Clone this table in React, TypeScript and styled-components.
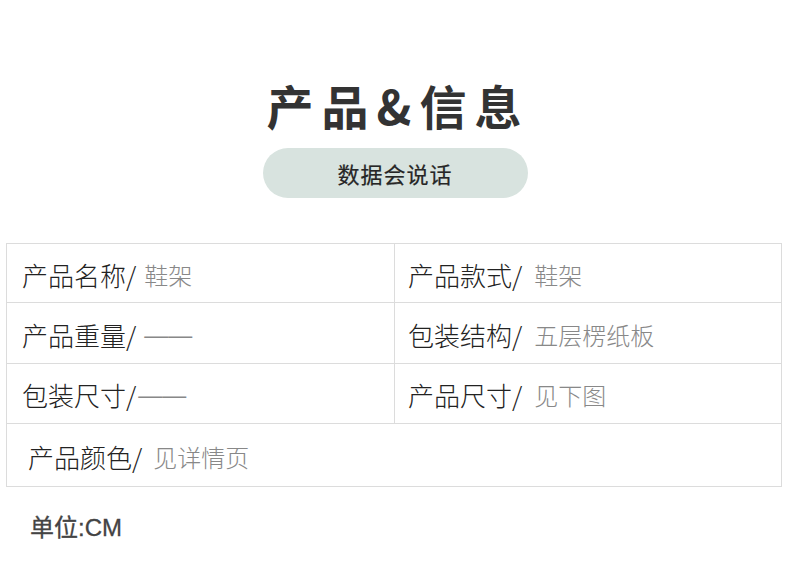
import React from "react";
import styled, { createGlobalStyle } from "styled-components";

const Global = createGlobalStyle`
  html, body { margin: 0; padding: 0; background: #fff; }
  body { font-family: "Noto Sans CJK SC", "Noto Sans", sans-serif; }
`;

const Page = styled.div`
  width: 790px;
  height: 578px;
  display: flex;
  flex-direction: column;
  align-items: center;
  background: #fff;
  overflow: hidden;
`;

const Title = styled.h1`
  margin: 80px 0 0 6px;
  font-size: 47px;
  line-height: 50px;
  font-weight: 700;
  letter-spacing: 8px;
  color: #333;
`;

const Pill = styled.div`
  margin-top: 18px;
  width: 265px;
  height: 50px;
  border-radius: 25px;
  background: #d8e3df;
  display: flex;
  align-items: center;
  justify-content: center;
  font-size: 22px;
  font-weight: 400;
  color: #262626;
  letter-spacing: 1px;
  -webkit-text-stroke: 0.2px #262626;
`;

const Table = styled.div`
  margin-top: 45px;
  align-self: flex-start;
  margin-left: 6px;
  width: 776px;
  box-sizing: border-box;
  border: 1px solid #dcdcdc;
  display: grid;
  grid-template-columns: 388px 1fr;
  grid-template-rows: 59px 61px 60px 62px;
`;

const Cell = styled.div<{ $right?: boolean; $last?: boolean; $wide?: boolean; $pad?: number }>`
  box-sizing: border-box;
  display: flex;
  align-items: center;
  padding-left: ${(p) => p.$pad ?? 15}px;
  padding-top: 3px;
  border-bottom: ${(p) => (p.$last ? "none" : "1px solid #dcdcdc")};
  border-right: ${(p) => (p.$right || p.$wide ? "none" : "1px solid #dcdcdc")};
  grid-column: ${(p) => (p.$wide ? "1 / span 2" : "auto")};
`;

const Label = styled.span`
  font-size: 26px;
  font-weight: 300;
  color: #222;
  line-height: 1;
`;

const Value = styled.span<{ $gap?: number }>`
  margin-left: ${(p) => p.$gap ?? 8}px;
  font-size: 24px;
  font-weight: 300;
  color: #888;
  line-height: 1;
`;

const Dash = styled.span<{ $gap?: number }>`
  margin-left: ${(p) => p.$gap ?? 8}px;
  font-family: "Liberation Sans", sans-serif;
  font-size: 24px;
  color: #888;
  line-height: 1;
`;

const Unit = styled.div`
  align-self: flex-start;
  margin: 21px 0 0 30px;
  font-family: "Liberation Sans", "Noto Sans CJK SC", sans-serif;
  font-size: 24px;
  font-weight: 400;
  color: #444;
  -webkit-text-stroke: 0.3px #444;
`;

export default function App() {
  return (
    <>
      <Global />
      <Page>
        <Title>产品&amp;信息</Title>
        <Pill>数据会说话</Pill>
        <Table>
          <Cell>
            <Label>产品名称/</Label>
            <Value>鞋架</Value>
          </Cell>
          <Cell $right $pad={13}>
            <Label>产品款式/</Label>
            <Value $gap={12}>鞋架</Value>
          </Cell>
          <Cell>
            <Label>产品重量/</Label>
            <Dash $gap={8}>——</Dash>
          </Cell>
          <Cell $right $pad={13}>
            <Label>包装结构/</Label>
            <Value $gap={12}>五层楞纸板</Value>
          </Cell>
          <Cell>
            <Label>包装尺寸/</Label>
            <Dash $gap={2}>——</Dash>
          </Cell>
          <Cell $right $pad={13}>
            <Label>产品尺寸/</Label>
            <Value $gap={12}>见下图</Value>
          </Cell>
          <Cell $wide $last $pad={21}>
            <Label>产品颜色/</Label>
            <Value $gap={11}>见详情页</Value>
          </Cell>
        </Table>
        <Unit>单位:CM</Unit>
      </Page>
    </>
  );
}
